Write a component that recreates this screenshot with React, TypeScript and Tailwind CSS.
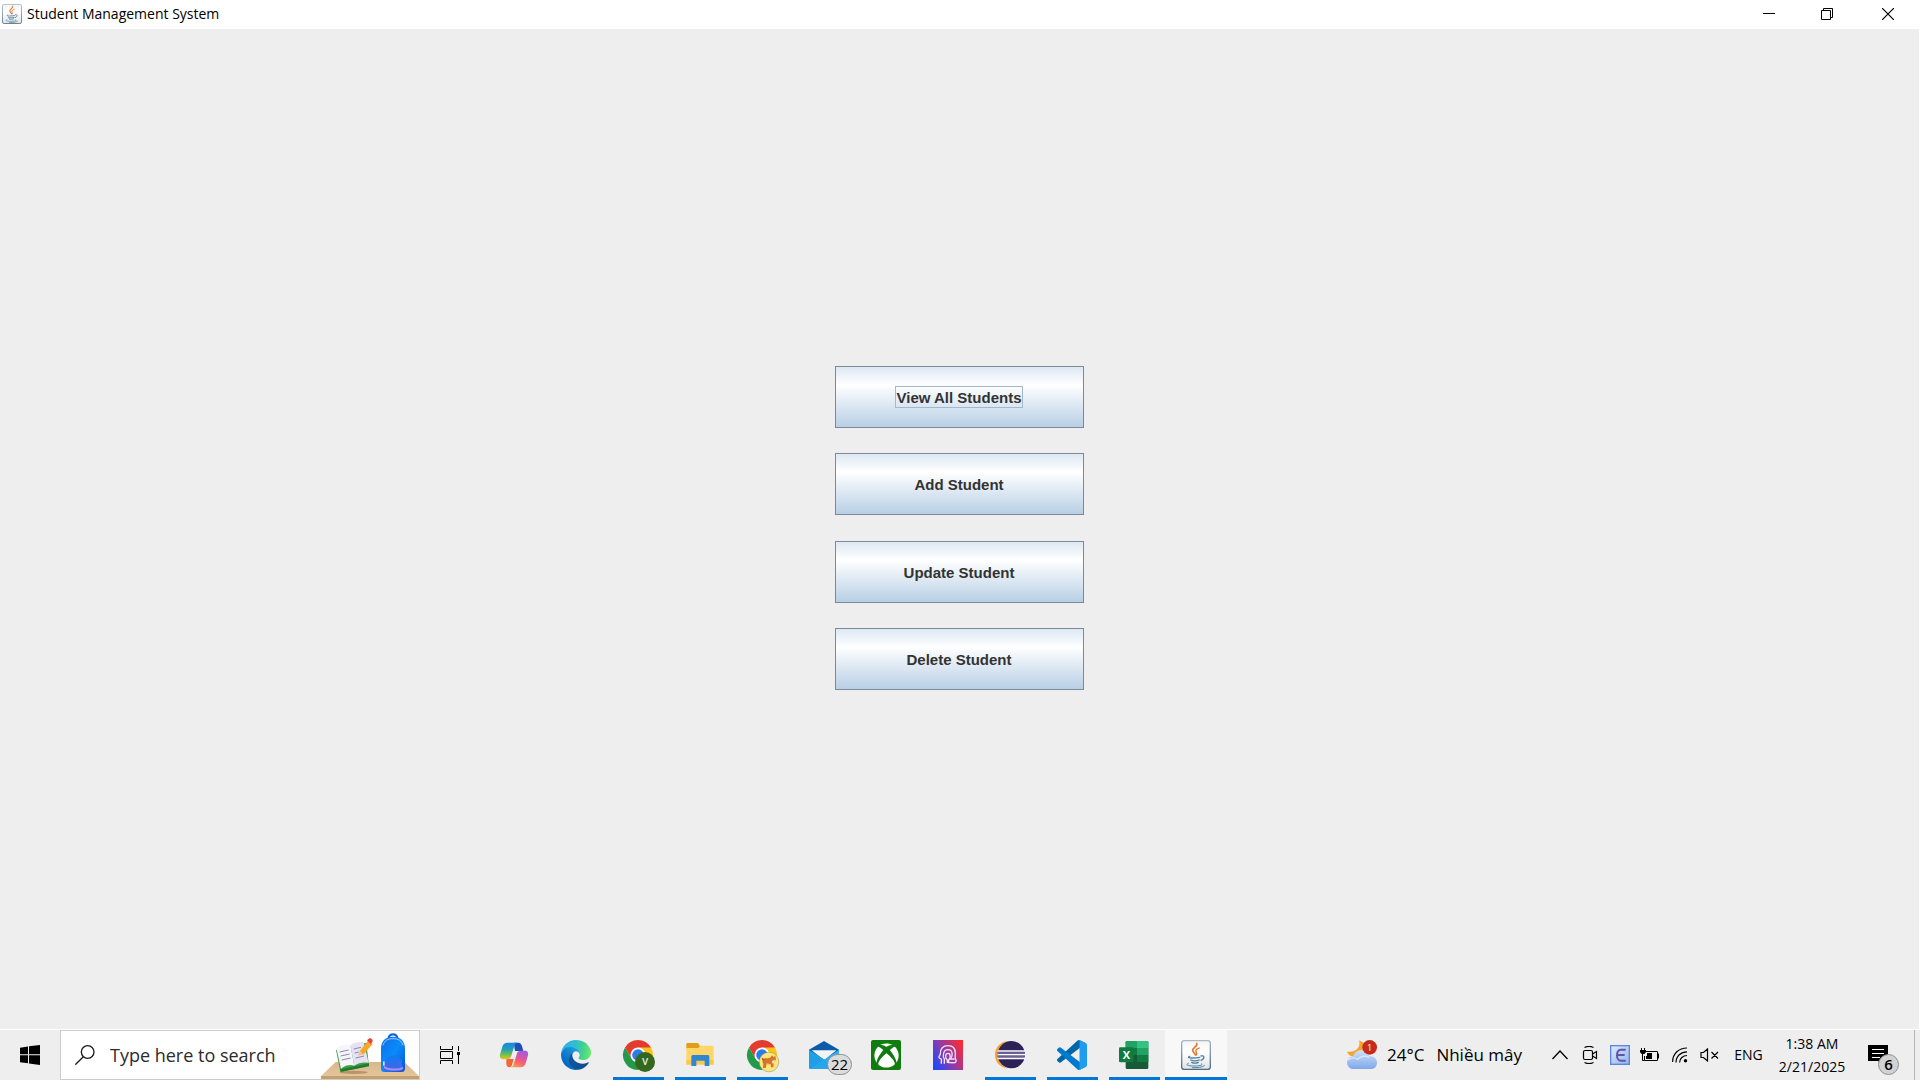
import type { ReactNode } from "react";
import { FaXbox } from "react-icons/fa";

function JavaIcon({ size, id }: { size: number; id: string }) {
  return (
    <svg width={size} height={size} viewBox="0 0 90 90" aria-hidden="true">
      <defs>
        <linearGradient id={`${id}-face`} x1="0" y1="0" x2="0" y2="1">
          <stop offset="0" stopColor="#f3f4f5" />
          <stop offset="0.4" stopColor="#ffffff" />
          <stop offset="1" stopColor="#dfe3e6" />
        </linearGradient>
        <linearGradient id={`${id}-edge`} x1="0" y1="0" x2="0" y2="1">
          <stop offset="0" stopColor="#a9b8c4" />
          <stop offset="1" stopColor="#4f6b82" />
        </linearGradient>
      </defs>
      <rect x="2" y="2" width="86" height="86" rx="8" fill={`url(#${id}-face)`} stroke={`url(#${id}-edge)`} strokeWidth="4" />
      <g fill="none" strokeLinecap="round">
        <path d="M47 10c5 8-12 13-12 21 0 6 6 8 8 13" stroke="#e8762d" strokeWidth="5" />
        <path d="M55 24c-8 3-12 6-10 11 2 4 4 6 0 11" stroke="#e8762d" strokeWidth="4" />
        <path d="M26 49c-6 3-4 5 8 5 10 0 16-1 22-2" stroke="#5382a1" strokeWidth="4" />
        <path d="M60 48c10-3 13 7 0 13" stroke="#5382a1" strokeWidth="4" />
        <path d="M29 60c7 3 18 3 26 0M32 67c6 3 14 3 20 0" stroke="#5382a1" strokeWidth="4" />
        <path d="M22 70c-9 3-5 8 18 8 20 0 27-4 22-7M34 83c16 1 30-1 36-6" stroke="#5382a1" strokeWidth="3" />
      </g>
    </svg>
  );
}

function ChromeIcon({ children }: { children: ReactNode }) {
  return (
    <svg width="30" height="30" viewBox="0 0 90 90" className="overflow-visible" aria-hidden="true">
      <path d="M45 45L84 22.5A45 45 0 0 0 6 22.5L26 57z" fill="#e33b2e" />
      <path d="M45 22.5H84A45 45 0 0 1 45 90L64.5 56z" fill="#fcc31e" />
      <path d="M6 22.5L25.5 56.3 64.5 56.3 45 90A45 45 0 0 1 6 22.5z" fill="#229a48" />
      <circle cx="45" cy="45" r="22.5" fill="#fff" />
      <circle cx="45" cy="45" r="17.5" fill="#2a7de9" />
      {children}
    </svg>
  );
}

function GreenBadge() {
  return (
    <g>
      <circle cx="66" cy="66" r="30" fill="#33691e" />
      <text x="66" y="76" textAnchor="middle" fontSize="29" fill="#e6eee2" fontFamily="Roboto, sans-serif" fontWeight="500">V</text>
    </g>
  );
}

function DogBadge() {
  return (
    <g>
      <circle cx="66" cy="66" r="29.5" fill="#fbe67c" stroke="#8c8a5c" strokeWidth="1.5" />
      <path d="M48 60c2-6 8-5 14-5 7 0 10-3 13-9l4 5 6-3 2 10c-2 6-6 7-7 12l-1 12h-7l-1-9-12-1-3 12h-8l1-13c-3-3-3-6-1-11z" fill="#d9722a" />
      <path d="M75 62c4 1 7-1 9-4-1 7-4 12-7 14z" fill="#fff3dc" />
      <path d="M49 62c-6-1-6-8-1-9 1 4 4 4 6 5z" fill="#b9531c" />
      <path d="M58 70l12 2-1 4-10-2z" fill="#f4c48c" />
    </g>
  );
}

function EdgeIcon() {
  return (
    <svg width="30" height="30" viewBox="0 0 256 256" aria-hidden="true">
      <defs>
        <linearGradient id="edge-a" x1="63" y1="177" x2="242" y2="177" gradientUnits="userSpaceOnUse">
          <stop offset="0" stopColor="#0c59a4" />
          <stop offset="1" stopColor="#114a8b" />
        </linearGradient>
        <linearGradient id="edge-b" x1="157" y1="100" x2="46" y2="221" gradientUnits="userSpaceOnUse">
          <stop offset="0" stopColor="#1b9de2" />
          <stop offset="0.4" stopColor="#1385d2" />
          <stop offset="1" stopColor="#0667bd" />
        </linearGradient>
        <linearGradient id="edge-c" x1="20" y1="70" x2="255" y2="110" gradientUnits="userSpaceOnUse">
          <stop offset="0" stopColor="#2fb0e4" />
          <stop offset="0.4" stopColor="#30bcd4" />
          <stop offset="0.7" stopColor="#42cf93" />
          <stop offset="1" stopColor="#66eb6e" />
        </linearGradient>
      </defs>
      <g transform="translate(-4.63 -4.92)">
        <path fill="url(#edge-a)" d="M235.68 195.46a93.73 93.73 0 0 1-10.54 4.71 101.87 101.87 0 0 1-35.9 6.46c-47.32 0-88.54-32.55-88.54-74.32A31.48 31.48 0 0 1 117.13 105c-42.8 1.8-53.8 46.4-53.8 72.53 0 73.88 68.09 81.37 82.76 81.37 7.91 0 19.84-2.3 27-4.56l1.31-.44a128.34 128.34 0 0 0 66.6-52.8 4 4 0 0 0-5.32-5.64z" />
        <path fill="url(#edge-b)" d="M110.34 246.34A79.2 79.2 0 0 1 87.6 225a80.72 80.72 0 0 1 29.53-120c3.12-1.47 8.45-4.13 15.54-4a32.35 32.35 0 0 1 25.69 13 31.88 31.88 0 0 1 6.36 18.66c0-.21 24.46-79.6-80-79.6-43.9 0-80 41.66-80 78.21a130.15 130.15 0 0 0 12.11 56 128 128 0 0 0 156.38 67.11 75.55 75.55 0 0 1-62.78-8z" />
        <path fill="url(#edge-c)" d="M156.94 153.78c-.81 1.05-3.3 2.5-3.3 5.66 0 2.61 1.7 5.12 4.72 7.23 14.38 10 41.49 8.68 41.56 8.68a59.56 59.56 0 0 0 30.27-8.35 61.38 61.38 0 0 0 30.43-52.88c.26-22.41-8-37.31-11.34-43.91-21.19-41.45-66.93-65.29-116.67-65.29a128 128 0 0 0-128 126.2c.48-36.54 36.8-66.05 80-66.05 3.5 0 23.46.34 42 10.07 16.34 8.58 24.9 18.94 30.85 29.21 6.18 10.67 7.28 24.15 7.28 29.52s-2.74 13.33-7.8 19.91z" />
      </g>
    </svg>
  );
}

function CopilotIcon() {
  return (
    <svg width="30" height="30" viewBox="0 0 90 90" aria-hidden="true">
      <defs>
        <linearGradient id="cp-left" x1="0" y1="0" x2="0" y2="1">
          <stop offset="0" stopColor="#1a86de" />
          <stop offset="0.4" stopColor="#22a0b8" />
          <stop offset="0.7" stopColor="#6cbf50" />
          <stop offset="1" stopColor="#e8c428" />
        </linearGradient>
        <linearGradient id="cp-right" x1="0.7" y1="0" x2="0.3" y2="1">
          <stop offset="0" stopColor="#a35be0" />
          <stop offset="0.45" stopColor="#e0559f" />
          <stop offset="0.75" stopColor="#fb6d64" />
          <stop offset="1" stopColor="#fba043" />
        </linearGradient>
      </defs>
      <path d="M44 8h14c6 0 9 4 11 11l4 14H48z" fill="#1b50b8" />
      <path d="M22 57h22l-4 15c-2 6-4 10-9 10-6 0-8-5-9-10z" fill="#f4653a" />
      <path d="M26 8h30c-7 1-9 6-11 13L36 50c-2 5-5 8-10 8H12C5 58 1 52 3 44L10 20C12 12 18 8 26 8z" fill="url(#cp-left)" />
      <path d="M64 82H34c7-1 9-6 11-13L54 40c2-5 5-8 10-8h14c7 0 11 6 9 14L80 70c-2 8-8 12-16 12z" fill="url(#cp-right)" />
    </svg>
  );
}

function ExplorerIcon() {
  return (
    <svg width="30" height="30" viewBox="0 0 90 90" aria-hidden="true">
      <path d="M4 12c0-2 1-3 3-3h32l6 9v8H4z" fill="#e0a016" />
      <path d="M4 24h36l6-7h37c2 0 3 1 3 3v53H4z" fill="#ffd768" />
      <path d="M4 60h82v14H4z" fill="#fbc94a" />
      <path d="M19 78V51c0-4 2-6 6-6h42c4 0 6 2 6 6v27H59V62H34v16z" fill="#2f87d3" />
    </svg>
  );
}

function MailIcon() {
  return (
    <svg width="30" height="30" viewBox="0 0 90 90" aria-hidden="true">
      <path d="M0 29L45 3l45 26v30H0z" fill="#0b5ba9" />
      <path d="M8 31h74L46 61z" fill="#f4f4f4" />
      <path d="M0 29l90 58H4c-3 0-4-2-4-4z" fill="#1fa0e6" />
      <path d="M90 29L4 87h82c3 0 4-2 4-4z" fill="#2cb0f0" />
      <path d="M46 58L4 87h82z" fill="#27a7ea" />
    </svg>
  );
}

function FaceIcon() {
  return (
    <svg width="30" height="30" viewBox="0 0 90 90" aria-hidden="true">
      <defs>
        <linearGradient id="face-bg" x1="0" y1="0.8" x2="1" y2="0.2">
          <stop offset="0" stopColor="#1f48fa" />
          <stop offset="0.45" stopColor="#8a3cae" />
          <stop offset="1" stopColor="#fb2a33" />
        </linearGradient>
      </defs>
      <rect width="90" height="90" fill="url(#face-bg)" />
      <g fill="none" stroke="#efe3fb" strokeWidth="4">
        <path d="M25 71V57c-5-2-8-4-7-7l4-8c0-16 9-25 23-25 15 0 22 10 22 23 0 7-2 12 1 18 2 5 2 10-4 10h-9" />
        <path d="M34 71V57c-5-6-5-28 11-28 15 0 15 18 8 28h12" />
        <path d="M43 69v-9c-7-5-7-20 2-20s8 14 2 20v8h17" />
      </g>
    </svg>
  );
}

function EclipseIcon() {
  return (
    <svg width="30" height="30" viewBox="0 0 90 90" aria-hidden="true">
      <path d="M40 3C14 6 0 23 0 44s14 38 40 42C20 78 9 63 9 44S20 11 40 3z" fill="#f7a034" />
      <circle cx="49" cy="44" r="41" fill="#2c2255" />
      <path d="M8 33h82M8 44h82M8 55h82" stroke="#fff" strokeWidth="5" />
      <path d="M8 38.500h82M8 49.500h82" stroke="#6c5fa0" strokeWidth="5" />
    </svg>
  );
}

function VsCodeIcon() {
  return (
    <svg width="30" height="30" viewBox="0 0 100 100" aria-hidden="true">
      <path fill="#0065a9" d="M96.461 10.796 75.857.876a6.23 6.23 0 0 0-7.107 1.207l-67.451 61.5a4.167 4.167 0 0 0 .004 6.162l5.51 5.009a4.167 4.167 0 0 0 5.32.236l81.228-61.62c2.725-2.067 6.639-.124 6.639 3.297v-.24a6.25 6.25 0 0 0-3.539-5.63Z" />
      <path fill="#007acc" d="m96.461 89.204-20.604 9.92a6.229 6.229 0 0 1-7.107-1.207l-67.451-61.5a4.167 4.167 0 0 1 .004-6.162l5.51-5.009a4.167 4.167 0 0 1 5.32-.236l81.228 61.62c2.725 2.067 6.639.124 6.639-3.297v.24a6.25 6.25 0 0 1-3.539 5.63Z" />
      <path fill="#1f9cf0" d="M75.858 99.126a6.232 6.232 0 0 1-7.108-1.21c2.306 2.307 6.25.674 6.25-2.588V4.672c0-3.262-3.944-4.895-6.25-2.589a6.232 6.232 0 0 1 7.108-1.21l20.6 9.908A6.25 6.25 0 0 1 100 16.413v67.174a6.25 6.25 0 0 1-3.541 5.633l-20.601 9.906Z" />
    </svg>
  );
}

function ExcelIcon() {
  return (
    <svg width="30" height="30" viewBox="0 0 90 90" aria-hidden="true">
      <rect x="20" y="3" width="68" height="84" rx="4" fill="#185c37" />
      <path d="M24 3h30v21H20V7c0-2 2-4 4-4z" fill="#21a366" />
      <path d="M54 3h30c2 0 4 2 4 4v17H54z" fill="#33c481" />
      <path d="M20 24h34v21H20z" fill="#107c41" />
      <path d="M54 24h34v21H54z" fill="#21a366" />
      <path d="M54 45h34v21H54z" fill="#107c41" />
      <rect x="0" y="22" width="44" height="45" rx="4" fill="#117a41" />
      <text x="22" y="56" textAnchor="middle" fontSize="33" fontWeight="700" fill="#fff" fontFamily="Open Sans, sans-serif">X</text>
    </svg>
  );
}

function SearchArt() {
  return (
    <svg width="98" height="50" viewBox="0 0 294 150" className="shrink-0" aria-hidden="true">
      <defs>
        <linearGradient id="bag" x1="0" y1="0" x2="1" y2="1">
          <stop offset="0" stopColor="#0b6fe8" />
          <stop offset="0.5" stopColor="#0a8bfb" />
          <stop offset="1" stopColor="#0a4fcf" />
        </linearGradient>
        <linearGradient id="pocket" x1="0" y1="0" x2="0" y2="1">
          <stop offset="0" stopColor="#0a7df2" />
          <stop offset="1" stopColor="#4a63e8" />
        </linearGradient>
        <linearGradient id="desk" x1="0" y1="0" x2="0" y2="1">
          <stop offset="0" stopColor="#d9b78c" />
          <stop offset="1" stopColor="#e3c59d" />
        </linearGradient>
      </defs>
      <path d="M44 96h206l44 42H0z" fill="url(#desk)" />
      <path d="M0 138h294v12H0z" fill="#c79f6d" />
      <ellipse cx="98" cy="127" rx="42" ry="5" fill="#b99468" />
      <path d="M45 60l91-22 8 70-86 17z" fill="#3da243" />
      <path d="M58 118l86-18v9l-85 17z" fill="#237a30" />
      <path d="M46 54c14-8 28-10 42-8l12 61c-13-4-26-2-40 9z" fill="#f6f4fc" />
      <path d="M88 46c12-9 26-11 40-9l15 62c-16-3-29-1-43 8z" fill="#e6e2f3" />
      <path d="M56 66l27-6M59 78l27-6M62 90l27-6M98 57l22-5M101 69l12-3M104 84l25-6" stroke="#8b87a5" strokeWidth="3" />
      <path d="M112 76l5-14 25-31 13 11-27 31z" fill="#f9a52a" />
      <path d="M112 76l5-14 9 11z" fill="#e9c79c" />
      <path d="M138 31l5-5c6-4 15 3 11 10l-5 6z" fill="#e8453c" />
      <path d="M203 26c0-17 26-17 26 0" fill="none" stroke="#1264d8" strokeWidth="7" />
      <path d="M180 56c0-24 14-36 36-36s36 12 36 36v60c0 6-4 10-10 10h-52c-6 0-10-4-10-10z" fill="url(#bag)" />
      <path d="M186 46c4-14 14-20 30-20s26 6 30 20" fill="none" stroke="#a9c9ff" strokeWidth="3" />
      <path d="M190 104c0-38 54-38 54 0v18h-54z" fill="url(#pocket)" />
      <path d="M189 106c6 12 48 12 56 4l2 6c-10 8-48 8-58-2z" fill="#b08cf0" />
      <rect x="186" y="94" width="5" height="13" rx="2" fill="#e5d9ff" />
    </svg>
  );
}

function WeatherIcon() {
  return (
    <svg width="30" height="30" viewBox="0 0 90 90" aria-hidden="true">
      <defs>
        <linearGradient id="cloud" x1="0" y1="0" x2="0" y2="1">
          <stop offset="0" stopColor="#cfe0fa" />
          <stop offset="1" stopColor="#7ea8ea" />
        </linearGradient>
      </defs>
      <path d="M36 1c6 20-8 38-36 34 6 14 20 18 36 12L62 30 50 8z" fill="#f5a32c" />
      <path d="M20 87a19 19 0 0 1-2-38c4-12 15-19 26-18 13 0 20 8 23 18 14-2 23 8 23 19 0 12-9 19-20 19z" fill="url(#cloud)" />
      <path d="M4 60c8-8 20-8 28-2 8-10 24-12 34-6" fill="none" stroke="#dbe9ff" strokeWidth="4" />
      <circle cx="68" cy="22" r="22" fill="#c42b1c" />
      <text x="68" y="32" textAnchor="middle" fontSize="27" fill="#fff" fontFamily="Open Sans, sans-serif">1</text>
    </svg>
  );
}

type App = { name: string; icon: ReactNode; state?: "open" | "active" };

const apps: App[] = [
  { name: "Copilot", icon: <CopilotIcon /> },
  { name: "Microsoft Edge", icon: <EdgeIcon /> },
  { name: "Google Chrome", icon: <ChromeIcon><GreenBadge /></ChromeIcon>, state: "open" },
  { name: "File Explorer", icon: <ExplorerIcon />, state: "open" },
  { name: "Google Chrome, second profile", icon: <ChromeIcon><DogBadge /></ChromeIcon>, state: "open" },
  {
    name: "Mail",
    icon: (
      <span className="relative block">
        <MailIcon />
        <span className="absolute top-3.5 left-[18px] flex h-[21px] w-[25px] items-center justify-center rounded-full border border-[#8f8f8f] bg-[#d9dbdc] text-[15px] leading-none text-black">22</span>
      </span>
    ),
  },
  {
    name: "Xbox",
    icon: (
      <span className="flex size-[30px] items-center justify-center rounded-xs bg-[#107c10] text-white">
        <FaXbox size={25} />
      </span>
    ),
  },
  { name: "Face", icon: <FaceIcon /> },
  { name: "Eclipse", icon: <EclipseIcon />, state: "open" },
  { name: "Visual Studio Code", icon: <VsCodeIcon />, state: "open" },
  { name: "Excel", icon: <ExcelIcon />, state: "open" },
  { name: "Student Management System", icon: <JavaIcon size={30} id="java-task" />, state: "active" },
];

function TaskButton({ app }: { app: App }) {
  return (
    <button
      type="button"
      aria-label={app.name}
      className={`flex h-full w-[62px] flex-col items-center ${app.state === "active" ? "bg-[#f8f8f8]" : ""}`}
    >
      <span className="flex w-full flex-1 items-center justify-center pt-[3px]">{app.icon}</span>
      <span
        className={`h-[3px] ${app.state === "active" ? "w-full bg-[#0078d7]" : app.state === "open" ? "w-[51px] bg-[#0078d7]" : "w-full"}`}
      />
    </button>
  );
}

function TrayButton({ label, children }: { label: string; children: ReactNode }) {
  return (
    <button type="button" aria-label={label} className="flex h-full w-[30px] items-center justify-center">
      {children}
    </button>
  );
}

function MenuButton({ label, focused = false }: { label: string; focused?: boolean }) {
  return (
    <button
      type="button"
      className="flex h-[62px] items-center justify-center border border-[#7a8a99] bg-linear-to-b from-[#dde8f3] via-white via-30% to-[#b8cfe5] font-['Liberation_Sans',Arial,sans-serif] text-[15px] leading-[18px] font-bold text-[#333333]"
    >
      <span className={`border pt-0.5 ${focused ? "border-[#a3b8cc]" : "border-transparent"}`}>{label}</span>
    </button>
  );
}

function TitleBar() {
  return (
    <header className="flex h-[29px] items-center bg-white pb-px">
      <h1 className="flex flex-1 items-center gap-[5px] pl-0.5 text-[14px] leading-5 text-black">
        <JavaIcon size={20} id="java-title" />
        Student Management System
      </h1>
      <button type="button" aria-label="Minimize" className="flex h-full w-[58px] items-center justify-center">
        <svg width="12" height="12" viewBox="0 0 12 12" aria-hidden="true">
          <path d="M0 5.500h12" stroke="#000" />
        </svg>
      </button>
      <button type="button" aria-label="Restore" className="flex h-full w-[58px] items-center justify-center">
        <svg width="12" height="12" viewBox="0 0 12 12" fill="none" stroke="#000" aria-hidden="true">
          <path d="M.5 2.500h9v9h-9zM2.500 2.500v-2h9v9h-2" />
        </svg>
      </button>
      <button type="button" aria-label="Close" className="flex h-full w-[64px] items-center justify-center">
        <svg width="12" height="12" viewBox="0 0 12 12" stroke="#000" strokeWidth="1.200" aria-hidden="true">
          <path d="M0 0l12 12M12 0L0 12" />
        </svg>
      </button>
    </header>
  );
}

function Taskbar() {
  return (
    <footer className="flex h-[51px] items-stretch border-t border-white bg-[#eeeeee]">
      <button type="button" aria-label="Start" className="flex w-[60px] items-center justify-center">
        <svg width="20" height="20" viewBox="0 0 60 60" aria-hidden="true">
          <path d="M0 8l24-3.500V28H0zM27 4l33-4v28H27zM0 31h24v24L0 51.500zM27 31h33v29l-33-4.500z" />
        </svg>
      </button>
      <label className="flex w-[360px] items-center overflow-hidden border border-[#cccccc] bg-white">
        <svg width="20" height="20" viewBox="0 0 60 60" fill="none" stroke="#1a1a1a" strokeWidth="4" className="ml-3.5 shrink-0" aria-hidden="true">
          <circle cx="38" cy="21" r="19" />
          <path d="M25 35L1 59" />
        </svg>
        <input
          type="text"
          aria-label="Search"
          placeholder="Type here to search"
          className="ml-[15px] min-w-0 flex-1 bg-transparent text-[18px] leading-6 outline-none placeholder:text-[#2b2b2b] placeholder:opacity-100"
        />
        <SearchArt />
      </label>
      <button type="button" aria-label="Task View" className="flex w-[63px] items-center justify-center pr-[3px]">
        <svg width="20" height="20" viewBox="0 0 20 20" fill="none" stroke="#000" aria-hidden="true">
          <path d="M.5 1v3.500h12V1M.5 19v-3.500h12V19M.5 6.500h12v7H.5zM18.500 1v5M18.500 10v9" />
          <path d="M17 7h3v3h-3z" fill="#000" stroke="none" />
        </svg>
      </button>
      <nav aria-label="Applications" className="flex">
        {apps.map((app) => (
          <TaskButton key={app.name} app={app} />
        ))}
      </nav>

      <div className="ml-auto flex items-center text-black">
        <button type="button" className="flex h-full items-center pr-[23px] text-[17px] leading-6 whitespace-nowrap">
          <WeatherIcon />
          <span className="ml-2.5">24°C</span>
          <span className="ml-3">Nhiều mây</span>
        </button>
        <TrayButton label="Show hidden icons">
          <svg width="16" height="10" viewBox="0 0 16 10" fill="none" stroke="#000" strokeWidth="1.300" aria-hidden="true">
            <path d="M.5 9L8 1l7.500 8" />
          </svg>
        </TrayButton>
        <TrayButton label="Meet Now">
          <svg width="16" height="18" viewBox="0 0 16 18" fill="none" stroke="#000" strokeWidth="1.200" aria-hidden="true">
            <rect x="1.500" y="4.500" width="9" height="9" rx="1.500" />
            <path d="M10.500 8L14.500 5.500v7L10.500 10M2.500 1.500c2.500-1.300 6.500-1.300 9 0M2.500 16.500c2.500 1.300 6.500 1.300 9 0" />
          </svg>
        </TrayButton>
        <TrayButton label="Input method">
          <svg width="20" height="20" viewBox="0 0 60 60" aria-hidden="true">
            <defs>
              <linearGradient id="ime" x1="0" y1="0" x2="1" y2="1">
                <stop offset="0" stopColor="#e2ecfb" />
                <stop offset="1" stopColor="#8fb0ee" />
              </linearGradient>
            </defs>
            <rect x="2" y="2" width="56" height="56" fill="url(#ime)" stroke="#5b86dc" strokeWidth="4" />
            <path d="M47 14H33c-16 0-16 33 0 33h14M21 30h23" fill="none" stroke="#5b55a8" strokeWidth="6" />
          </svg>
        </TrayButton>
        <TrayButton label="Battery">
          <svg width="20" height="14" viewBox="0 0 20 14" fill="none" stroke="#000" aria-hidden="true">
            <path d="M6 3.500h11.500v9h-13V8M18.500 5.500v5" />
            <path d="M2.500 6v6.500h2M1.500 0v2M4.500 0v2" />
            <path d="M0 2h6v2L4.500 6h-3L0 4zM7 5h5v6H6V8h1z" fill="#000" stroke="none" />
          </svg>
        </TrayButton>
        <TrayButton label="Wi-Fi">
          <svg width="16" height="16" viewBox="0 0 16 16" fill="none" stroke="#000" strokeWidth="1.200" aria-hidden="true">
            <path d="M.6 15C.6 6.500 7 1 15 1M4 15.500C4 9 9 4.800 15 4.800M7.600 15.500c0-4 3.400-7 7.400-7" />
            <circle cx="13.500" cy="13.800" r="1.700" fill="#000" stroke="none" />
          </svg>
        </TrayButton>
        <TrayButton label="Volume muted">
          <svg width="20" height="14" viewBox="0 0 20 14" fill="none" stroke="#000" strokeWidth="1.200" aria-hidden="true">
            <path d="M1 4.500h2.500L7.500 1v12L3.500 9.500H1zM11.500 4l6.500 6.500M18 4l-6.500 6.500" />
          </svg>
        </TrayButton>
        <button type="button" className="h-full w-[47px] text-center text-[14px] leading-5">ENG</button>
        <button type="button" className="flex h-full w-20 flex-col items-center justify-center text-[14px] leading-[23px] whitespace-nowrap">
          <span>1:38 AM</span>
          <span>2/21/2025</span>
        </button>
        <button type="button" aria-label="Notifications" className="flex h-full w-[62px] items-center justify-center">
          <span className="relative block h-5 w-[30px]">
            <svg width="20" height="20" viewBox="0 0 20 20" aria-hidden="true">
              <path d="M0 0h20v16H14v4l-4-4H0z" />
              <path d="M4 4.500h12M4 8.500h12M4 12.500h8" stroke="#fff" />
            </svg>
            <span className="absolute top-[9px] left-2.5 flex size-[21px] items-center justify-center rounded-full border border-[#8f8f8f] bg-[#d0d2d3] text-[15px] leading-none font-semibold">6</span>
          </span>
        </button>
        <button type="button" aria-label="Show desktop" className="h-full w-1.5 border-l border-[#b4b4b4]" />
      </div>
    </footer>
  );
}

export default function App() {
  return (
    <div className="flex min-h-screen flex-col bg-[#eeeeee] font-['Open_Sans','Noto_Sans',sans-serif]">
      <TitleBar />
      <main className="flex flex-1 items-center justify-center border-r border-white pb-0.5">
        <div className="flex h-[325px] w-[250px] flex-col justify-between pr-px">
          <MenuButton label="View All Students" focused />
          <MenuButton label="Add Student" />
          <MenuButton label="Update Student" />
          <MenuButton label="Delete Student" />
        </div>
      </main>
      <Taskbar />
    </div>
  );
}
